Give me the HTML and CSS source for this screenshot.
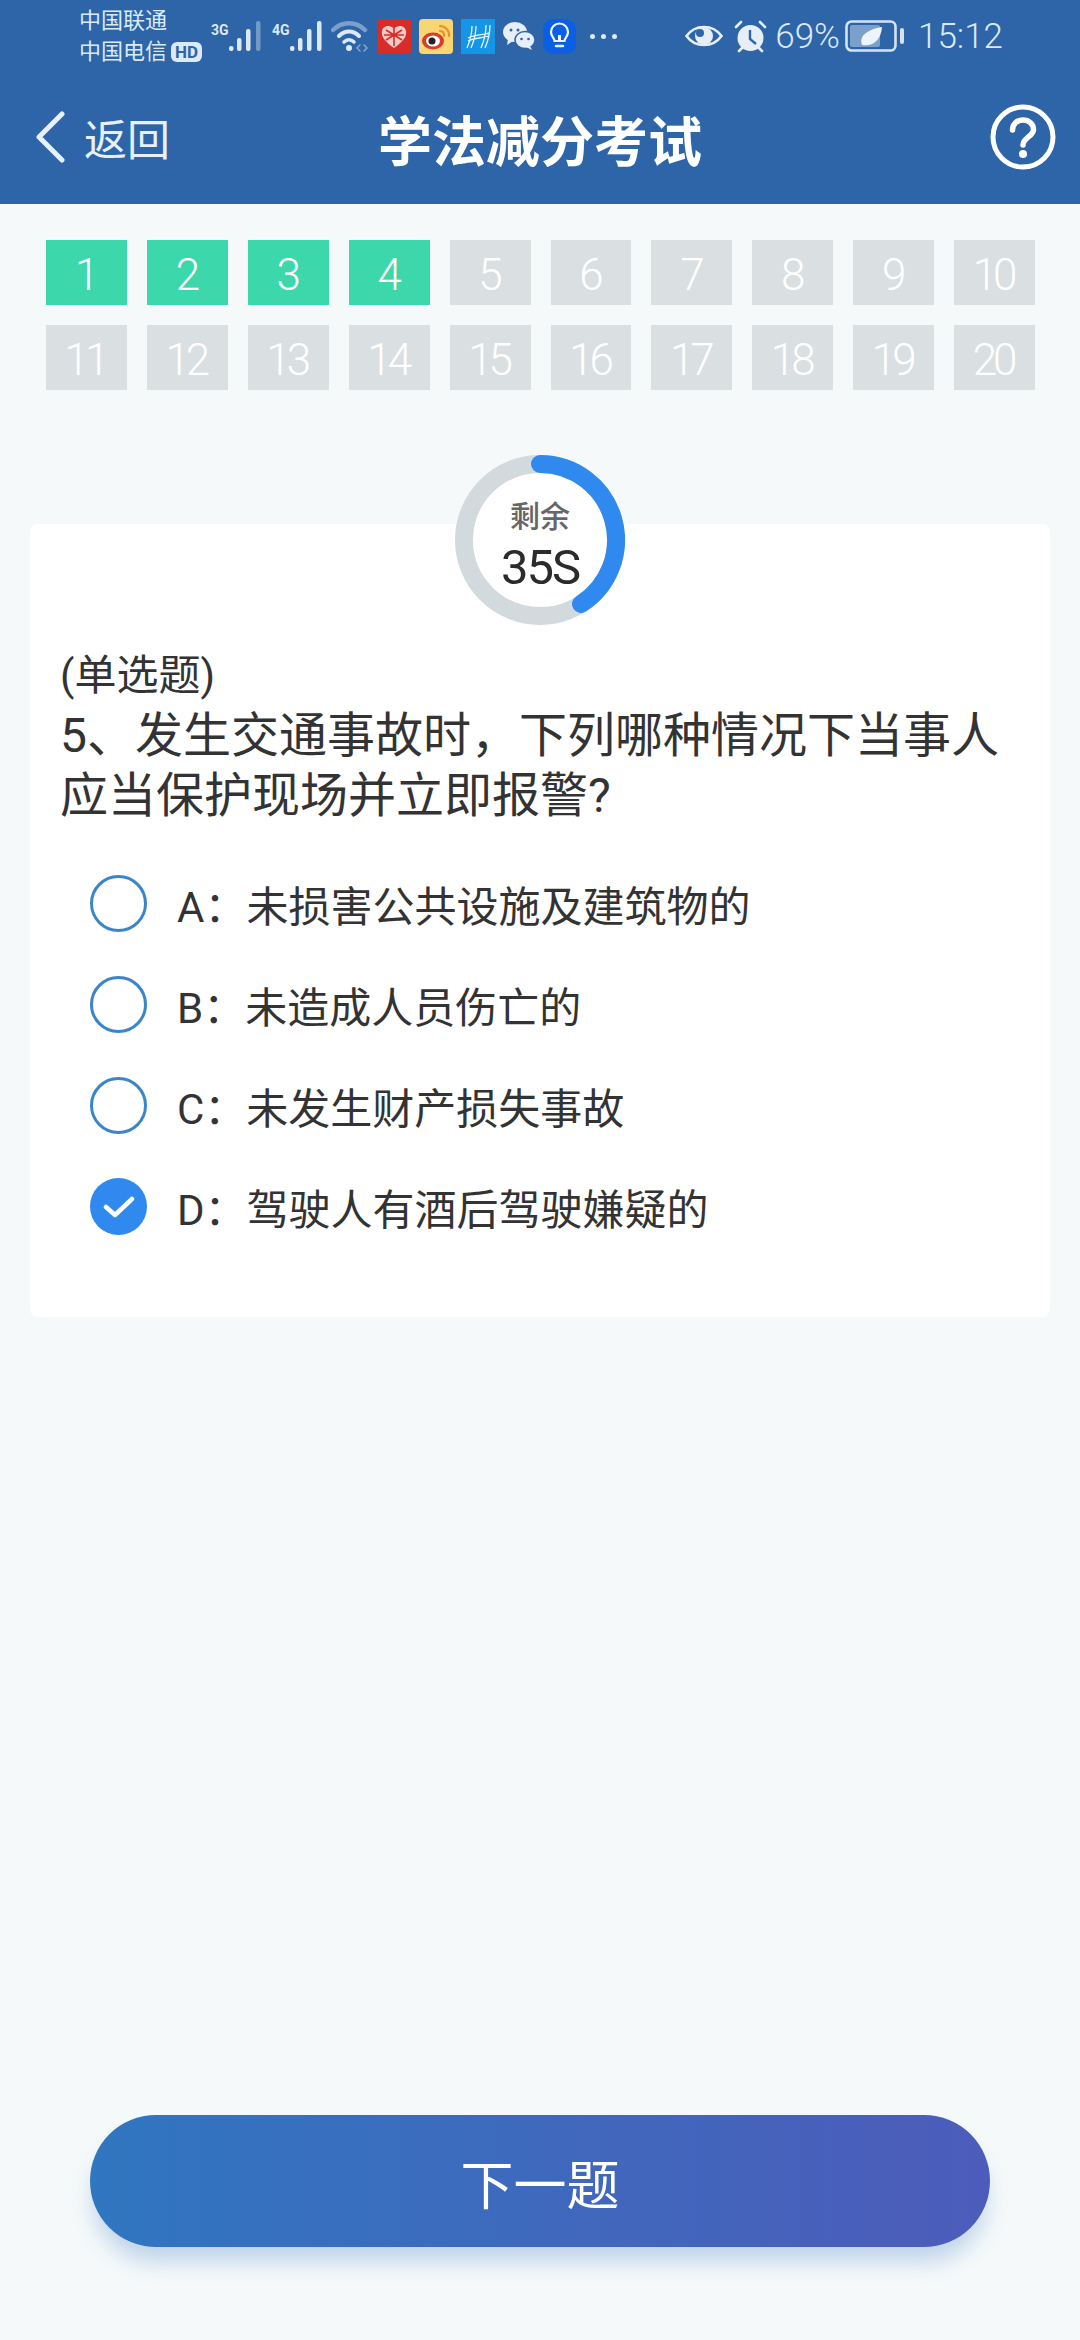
FILE: index.html
```html
<!DOCTYPE html>
<html lang="zh-CN">
<head>
    <meta charset="UTF-8">
    <meta name="viewport" content="width=device-width, initial-scale=1.0">
    <title>学法减分考试</title>
    <link rel="stylesheet" href="styles.css">
</head>
<body>
<div class="page">
    <div class="topbar">
        <div class="status">
            <div class="status-left">
                <div class="carriers">
                    <div>中国联通</div>
                    <div>中国电信<span class="hd">HD</span></div>
                </div>
                <span class="net">3G</span>
                <svg class="bars" width="34" height="32" viewBox="0 0 34 32"><rect x="0" y="26" width="4.500" height="5" rx="2"/><rect x="8" y="18" width="4.500" height="13" rx="2"/><rect x="17" y="9" width="4.500" height="22" rx="2"/><rect x="27" y="1" width="4.500" height="30" rx="2" opacity=".4"/></svg>
                <span class="net net-b">4G</span>
                <svg class="bars" width="34" height="32" viewBox="0 0 34 32"><rect x="0" y="26" width="4.500" height="5" rx="2"/><rect x="8" y="18" width="4.500" height="13" rx="2"/><rect x="17" y="9" width="4.500" height="22" rx="2"/><rect x="27" y="1" width="4.500" height="30" rx="2"/></svg>
                <svg class="wifi" width="38" height="34" viewBox="0 0 38 34" fill="none" stroke="#dce9f6" stroke-linecap="round"><path d="M2 11C11 2 25 2 34 11" stroke-width="4.500" opacity=".45"/><path d="M8 17C14 11 22 11 28 17" stroke-width="4"/><path d="M13 23C16 20 20 20 23 23" stroke-width="3.500"/><circle cx="18" cy="29" r="3" fill="#dce9f6" stroke="none"/><path d="M29 26l-3 3 3 3M33 26l3 3-3 3" stroke-width="1.500" opacity=".5"/></svg>
                <svg class="app" width="34" height="35" viewBox="0 0 34 35"><rect width="34" height="35" rx="3" fill="#d82c28"/><path d="M17 29C7 22 4 17 5 12c1-5 8-7 12-2 4-5 11-3 12 2 1 5-2 10-12 17z" fill="#f5c9c6"/><path d="M9 11l16 10M25 11L9 21M17 9v18M7 16h20" stroke="#d82c28" stroke-width="1.600"/></svg>
                <svg class="app" width="34" height="35" viewBox="0 0 34 35"><rect width="34" height="35" rx="4" fill="#f9d671"/><ellipse cx="14" cy="22" rx="11" ry="8.500" fill="#dc3a2a"/><ellipse cx="14" cy="22" rx="7" ry="5.500" fill="#fff"/><circle cx="13" cy="22" r="3.500" fill="#222"/><path d="M21 7a9 9 0 0 1 9 10M21 12a4 4 0 0 1 4 5" fill="none" stroke="#e8912c" stroke-width="2.200" stroke-linecap="round"/></svg>
                <svg class="app" width="34" height="35" viewBox="0 0 34 35" fill="none"><rect width="34" height="35" fill="#1595e6"/><path d="M11 7C11 16 9 22 6 29M15 7C15 16 13 22 10 29M25 6C25 15 23 22 20 29M29 6C29 15 27 22 24 29M7 19c6-3 14-3 22-5M7 22c6-3 14-3 21-5" stroke="#e6f5fd" stroke-width="1.300"/></svg>
                <svg class="app" width="32" height="30" viewBox="0 0 32 30"><ellipse cx="12" cy="11" rx="12" ry="10" fill="#e6eff8"/><path d="M5 18l-1 6 6-4z" fill="#e6eff8"/><ellipse cx="22" cy="19" rx="10" ry="8.500" fill="#e6eff8" stroke="#2d65a8" stroke-width="1.500"/><path d="M27 25l2 4-6-3z" fill="#e6eff8"/><circle cx="8" cy="9" r="1.500" fill="#2d65a8"/><circle cx="15" cy="9" r="1.500" fill="#2d65a8"/><circle cx="18.500" cy="18" r="1.300" fill="#2d65a8"/><circle cx="25.500" cy="18" r="1.300" fill="#2d65a8"/></svg>
                <svg class="app" width="33" height="35" viewBox="0 0 33 35" fill="none"><rect width="33" height="35" rx="10" fill="#0b5fe4"/><path d="M11.500 22c0-3-3.500-4-3.500-9a8.500 8.500 0 0 1 17 0c0 5-3.500 6-3.500 9z" stroke="#f1f6fd" stroke-width="2.200"/><path d="M13 27h7" stroke="#f1f6fd" stroke-width="2.500" stroke-linecap="round"/><path d="M16.500 22v-6" stroke="#f1f6fd" stroke-width="3"/></svg>
                <span class="more"><i></i><i></i><i></i></span>
            </div>
            <div class="status-right">
                <svg width="38" height="26" viewBox="0 0 38 26"><path d="M1.500 13C10 1 28 1 36.500 13 28 25 10 25 1.500 13z" fill="none" stroke="#e6eff8" stroke-width="2.600"/><circle cx="19" cy="13" r="9" fill="#e6eff8"/><circle cx="15" cy="10" r="4" fill="#2d65a8"/></svg>
                <svg class="alarm" width="33" height="33" viewBox="0 0 33 33"><circle cx="16.500" cy="18" r="13" fill="#e6eff8"/><path d="M16 10v9l6 5" fill="none" stroke="#2d65a8" stroke-width="2.400"/><path d="M2 7l5-5M31 7l-5-5M5 31l3-3M28 31l-3-3" stroke="#e6eff8" stroke-width="2.600" stroke-linecap="round"/></svg>
                <span class="pct">69%</span>
                <svg class="battery" width="60" height="32" viewBox="0 0 60 32"><rect x="1.500" y="1.500" width="49" height="29" rx="5" fill="none" stroke="#d4e3f3" stroke-width="2.600"/><rect x="5" y="5" width="30" height="22" rx="2" fill="#dce9f6" opacity=".45"/><path d="M17 25c-3-8 3-15 20-18-1 12-8 20-20 18z" fill="#eef4fb"/><rect x="55" y="8" width="4" height="16" rx="2" fill="#d4e3f3"/></svg>
                <span class="clock">15:12</span>
            </div>
        </div>
        <div class="nav">
            <div class="back">
                <svg width="30" height="52" viewBox="0 0 30 52" fill="none"><path d="M27 3L4 26l23 23" stroke="#e8f0f9" stroke-width="5" stroke-linecap="round" stroke-linejoin="round"/></svg>
                <span>返回</span>
            </div>
            <div class="nav-title">学法减分考试</div>
            <svg class="help" width="66" height="66" viewBox="0 0 66 66" fill="none"><circle cx="33" cy="33" r="30" stroke="#fff" stroke-width="5"/><path d="M22.500 26c0-6 4.500-10 10.500-10s10.500 4 10.500 9.500c0 7-10.500 8-10.500 15.500" stroke="#fff" stroke-width="5.500" stroke-linecap="round"/><circle cx="33" cy="50" r="4" fill="#fff"/></svg>
        </div>
    </div>

    <div class="numbers">
        <div class="num done">1</div>
        <div class="num done">2</div>
        <div class="num done">3</div>
        <div class="num done">4</div>
        <div class="num">5</div>
        <div class="num">6</div>
        <div class="num">7</div>
        <div class="num">8</div>
        <div class="num">9</div>
        <div class="num">10</div>
        <div class="num">11</div>
        <div class="num">12</div>
        <div class="num">13</div>
        <div class="num">14</div>
        <div class="num">15</div>
        <div class="num">16</div>
        <div class="num">17</div>
        <div class="num">18</div>
        <div class="num">19</div>
        <div class="num">20</div>
    </div>

    <div class="card">
        <div class="timer">
            <svg width="170" height="170" viewBox="0 0 170 170" fill="none">
                <circle cx="85" cy="85" r="76" stroke="#d2dadd" stroke-width="18" fill="#fff"/>
                <path d="M85 9A76 76 0 0 1 126 149" stroke="#2f89ee" stroke-width="18" stroke-linecap="round"/>
            </svg>
            <div class="timer-text">
                <div class="timer-label">剩余</div>
                <div class="timer-value">35S</div>
            </div>
        </div>
        <div class="q-type">(单选题)</div>
        <div class="q-text">5、发生交通事故时，下列哪种情况下当事人应当保护现场并立即报警?</div>
        <div class="options">
            <div class="option"><span class="radio"></span><span>A：未损害公共设施及建筑物的</span></div>
            <div class="option"><span class="radio"></span><span>B：未造成人员伤亡的</span></div>
            <div class="option"><span class="radio"></span><span>C：未发生财产损失事故</span></div>
            <div class="option">
                <span class="radio checked">
                    <svg width="32" height="24" viewBox="0 0 32 24" fill="none"><path d="M3 12l9 8L29 4" stroke="#fff" stroke-width="4.500" stroke-linecap="round" stroke-linejoin="round"/></svg>
                </span>
                <span>D：驾驶人有酒后驾驶嫌疑的</span>
            </div>
        </div>
    </div>

    <div class="next">下一题</div>
</div>
</body>
</html>
```

FILE: styles.css
```css
* {
    box-sizing: border-box;
}
body {
    margin: 0;
    padding: 0;
    font-family: Roboto, "Noto Sans CJK SC", sans-serif;
    background-color: #f5f9fa;
    color: #333;
}
.page {
    display: flex;
    flex-direction: column;
    height: 2340px;
}
.topbar {
    height: 204px;
    background-color: #2d65a8;
    color: #fff;
    flex-shrink: 0;
}
.status {
    height: 72px;
    display: flex;
    justify-content: space-between;
    align-items: center;
    padding: 0 77px 0 79px;
    color: #dce9f6;
}
.status-left,
.status-right {
    display: flex;
    align-items: center;
}
.carriers {
    width: 132px;
    font-size: 22px;
    line-height: 31px;
    white-space: nowrap;
}
.hd {
    display: inline-block;
    margin-left: 4px;
    padding: 0 4px;
    background-color: #dce9f6;
    color: #2d65a8;
    border-radius: 6px;
    font-size: 17px;
    line-height: 20px;
    font-weight: 700;
    vertical-align: 1px;
}
.net {
    width: 18px;
    margin-bottom: 12px;
    font-size: 14px;
    line-height: 16px;
    font-weight: 700;
    white-space: nowrap;
}
.net-b {
    margin-left: 9px;
}
.bars {
    fill: #dce9f6;
    margin-left: 0;
}
.wifi {
    margin-left: 7px;
}
.app {
    margin-left: 8px;
    flex-shrink: 0;
}
.more {
    display: flex;
    gap: 6px;
    margin-left: 14px;
}
.more i {
    width: 5px;
    height: 5px;
    border-radius: 50%;
    background-color: #dce9f6;
}
.alarm {
    margin-left: 11px;
}
.pct {
    margin-left: 8px;
    font-size: 35px;
    font-weight: 300;
}
.battery {
    margin-left: 5px;
}
.clock {
    margin-left: 13px;
    font-size: 35px;
    font-weight: 300;
}
.nav {
    position: relative;
    height: 132px;
    display: flex;
    justify-content: space-between;
    align-items: center;
    padding: 0 24px 2px 35px;
}
.back {
    display: flex;
    align-items: center;
    gap: 19px;
    font-size: 43px;
    color: #e8f0f9;
}
.nav-title {
    position: absolute;
    left: 0;
    right: 0;
    margin-top: 2px;
    text-align: center;
    font-size: 54px;
    font-weight: 700;
}
.numbers {
    display: grid;
    grid-template-columns: repeat(10, 1fr);
    grid-auto-rows: 65px;
    gap: 20px;
    width: 989px;
    margin: 36px 0 0 46px;
}
.num {
    display: flex;
    align-items: center;
    justify-content: center;
    padding: 4px 3px 0 0;
    background-color: #dadfe1;
    color: #fff;
    font-size: 44px;
    font-weight: 300;
    letter-spacing: -4px;
}
.num.done {
    background-color: #3cd7aa;
}
.card {
    position: relative;
    height: 793px;
    margin: 134px 30px 0;
    padding: 128px 30px 0;
    background-color: #fff;
    border-radius: 8px;
}
.timer {
    position: absolute;
    top: -69px;
    left: 425px;
    width: 170px;
    height: 170px;
}
.timer svg {
    display: block;
}
.timer-text {
    position: absolute;
    top: 0;
    left: 0;
    width: 100%;
    padding-top: 42px;
    text-align: center;
}
.timer-label {
    font-size: 30px;
    line-height: 40px;
    font-weight: 500;
    color: #666;
}
.timer-value {
    margin-top: 3px;
    font-size: 49px;
    line-height: 56px;
    color: #2b2b2b;
    letter-spacing: -2px;
}
.q-type {
    font-size: 42px;
    line-height: 48px;
}
.q-text {
    margin-top: 6px;
    font-size: 48px;
    line-height: 60px;
}
.options {
    margin: 27px 0 0 30px;
}
.option {
    height: 101px;
    display: flex;
    align-items: center;
    gap: 30px;
    font-size: 42px;
}
.radio {
    width: 57px;
    height: 57px;
    flex-shrink: 0;
    border: 3px solid #3a85cc;
    border-radius: 50%;
    display: flex;
    align-items: center;
    justify-content: center;
}
.radio.checked {
    border: none;
    background-color: #2f89ee;
}
.next {
    flex-shrink: 0;
    height: 132px;
    margin: auto 90px 93px;
    padding-top: 2px;
    border-radius: 66px;
    display: flex;
    align-items: center;
    justify-content: center;
    background: linear-gradient(90deg, #3076c0, #4d5cba);
    box-shadow: 0 18px 22px -4px rgba(48, 110, 190, 0.28);
    color: #fff;
    font-size: 53px;
}
```
